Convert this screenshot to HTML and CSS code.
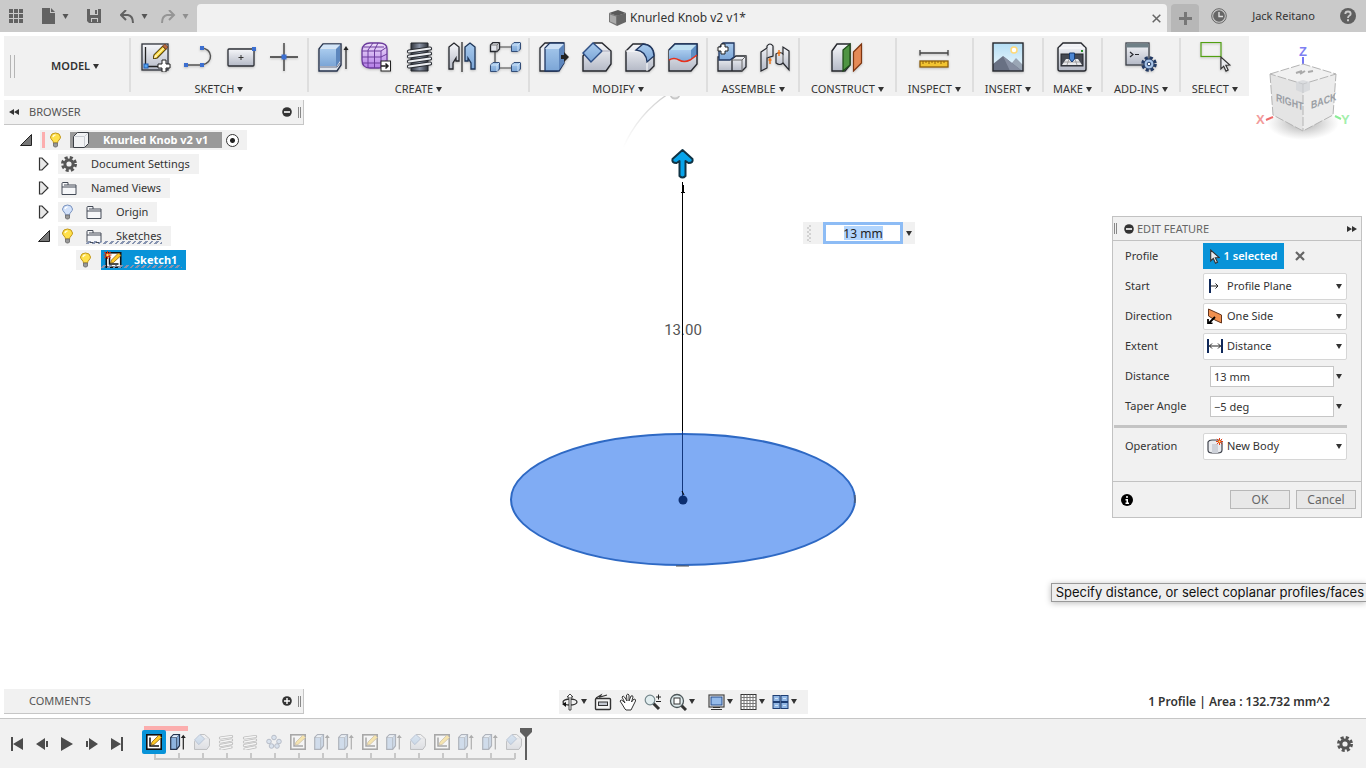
FILE: index.html
```html
<!DOCTYPE html>
<html lang="en">
<head>
<meta charset="utf-8">
<title>Knurled Knob v2 v1*</title>
<link rel="stylesheet" href="styles.css">
</head>
<body>
<svg class="sprite" aria-hidden="true">
  <defs>
    <linearGradient id="gBlue" x1="0" y1="0" x2="0" y2="1"><stop offset="0" stop-color="#a9cbee"/><stop offset="1" stop-color="#7ba5d6"/></linearGradient>
    <linearGradient id="gGray" x1="0" y1="0" x2="0" y2="1"><stop offset="0" stop-color="#f6f7fa"/><stop offset="1" stop-color="#b4b9c6"/></linearGradient>
    <linearGradient id="gPurple" x1="0" y1="0" x2="0" y2="1"><stop offset="0" stop-color="#efe2fb"/><stop offset="1" stop-color="#b27be6"/></linearGradient>
    <linearGradient id="gBar" x1="0" y1="0" x2="1" y2="0"><stop offset="0" stop-color="#30343c"/><stop offset=".5" stop-color="#8a93a5"/><stop offset="1" stop-color="#30343c"/></linearGradient>
    <linearGradient id="gSky" x1="0" y1="0" x2="0" y2="1"><stop offset="0" stop-color="#b4def5"/><stop offset="1" stop-color="#eef8fd"/></linearGradient>
    <linearGradient id="gFade" x1="0" y1="1" x2="0" y2="0"><stop offset="0" stop-color="#ddd" stop-opacity="0"/><stop offset="1" stop-color="#ccc"/></linearGradient>
    <radialGradient id="gShade"><stop offset="0" stop-color="#777" stop-opacity=".65"/><stop offset="1" stop-color="#999" stop-opacity="0"/></radialGradient>
  </defs>
  <symbol id="caret" viewBox="0 0 6 5"><path d="M0 0h6L3 5z" fill="currentColor"/></symbol>
  <symbol id="pencil" viewBox="0 0 14 14"><path d="M0 14l1-4 8-8 3 3-8 8z" fill="#f9cf2c" stroke="#54420a"/><path d="M1 13l1-3 2 2z" fill="#fff3cf"/><path d="M9 2l2-2 3 3-2 2z" fill="#b9683e" stroke="#6a3a1c" stroke-width=".8"/><path d="M3 11l7-7" stroke="#fff5a8" stroke-width="1.2"/></symbol>
  <symbol id="sketch-new" viewBox="0 0 30 30"><rect x="2" y="2" width="26" height="26" fill="url(#gGray)" stroke="#30343c" stroke-width="1.3"/><path d="M5.500 5v19.500H19" fill="none" stroke="#222" stroke-width="1.300"/><rect x="4" y="22" width="4" height="4" fill="#58a6ee" stroke="#1c5cb8"/><use href="#pencil" x="13" y="2" width="15" height="15"/><path d="M22 18h4v4h4v4h-4v4h-4v-4h-4v-4h4z" fill="#fff" stroke="#222"/></symbol>
  <symbol id="line" viewBox="0 0 30 30"><path d="M4 23h15c12-2 11-17-1-17" fill="none" stroke="#555" stroke-width="1.400"/><path d="M1 21h4v4H1zM17 21h4v4h-4zM17 4h4v4h-4z" fill="#3c6fd0"/></symbol>
  <symbol id="rect" viewBox="0 0 30 30"><rect x="2" y="7" width="26" height="17" rx="1" fill="url(#gGray)" stroke="#2c2f36" stroke-width="1.300"/><path d="M12.500 15.500h5M15 13v5" stroke="#333"/><rect x="26" y="5" width="4" height="4" fill="#3c6fd0"/></symbol>
  <symbol id="point" viewBox="0 0 30 30"><path d="M1 15h28M15 1v28" stroke="#333" stroke-width="1.300"/><rect x="12.500" y="12.500" width="5" height="5" fill="#3c6fd0"/></symbol>
  <symbol id="extrude" viewBox="0 0 30 30"><path d="M1 7l4-5h18v21l-4 6H1z" fill="#dfe4ec" stroke="#26334d" stroke-width="1.400"/><path d="M2 7h16v17H2z" fill="url(#gBlue)"/><path d="M2 6.500L5.500 2.500h17L18 6.500z" fill="#d2e5f8"/><path d="M18 7l4-4v16l-4 6z" fill="#5c86bd"/><path d="M1 25h18l4-5" fill="none" stroke="#66718a"/><path d="M28 27V6" stroke="#222" stroke-width="1.200"/><path d="M25.500 8L28 4l2.500 4z" fill="#222"/></symbol>
  <symbol id="form" viewBox="0 0 30 30"><path d="M1 8q1-7 8-7h9q8 0 8 6v12q-1 7-8 7H9q-8 0-8-8z" fill="url(#gPurple)" stroke="#6b3a9c" stroke-width="1.300"/><path d="M1 9h19l6-4M1 15h19l6-3M1 21h18l6-2M7 26V8l5-7M13.500 26V8L17 1M20 25V9M3 5h20" fill="none" stroke="#6b3a9c"/><rect x="20" y="19" width="9.500" height="10" fill="#fff" stroke="#222"/><path d="M20 24h7M24.500 21.500L27 24l-2.500 2.500" fill="none" stroke="#222" stroke-width="1.500"/></symbol>
  <symbol id="thread" viewBox="0 0 30 30"><path d="M7 1h17v28H7z" fill="url(#gBar)" stroke="#23262c"/><path d="M5 9.500l21-3M5 14.500l21-3M5 19.500l21-3M5 24.500l21-3" stroke="#2a2d33" stroke-width="4.200" stroke-linecap="round"/><path d="M5 9.500l21-3M5 14.500l21-3M5 19.500l21-3M5 24.500l21-3" stroke="#eceef2" stroke-width="2.200" stroke-linecap="round"/></symbol>
  <symbol id="mirror" viewBox="0 0 30 30"><path d="M2 5l5-4 5 4v14H9v-3l-3 5v6H2z" fill="url(#gGray)" stroke="#26282e" stroke-width="1.300"/><path d="M28 5l-5-4-5 4v14h3v-3l3 5v6h4z" fill="url(#gBlue)" stroke="#1d3558" stroke-width="1.300"/><path d="M15 0v30" stroke="#222" stroke-width="1.200"/></symbol>
  <symbol id="cubelet" viewBox="0 0 10 10"><path d="M.5 3L3 .5h6.500V7L7 9.500H.5z" fill="url(#gBlue)" stroke="#344e78"/><path d="M.5 3H7l2.500-2.500M7 3v6.500" fill="none" stroke="#dcecfb" stroke-width=".8"/></symbol>
  <symbol id="pattern" viewBox="0 0 32 30"><path d="M6 5h20M6 5v21h20" fill="none" stroke="#444" stroke-width="1.200"/><use href="#cubelet" x="22" y="0" width="10" height="10"/><use href="#cubelet" x="1" y="20" width="10" height="10"/><use href="#cubelet" x="22" y="20" width="10" height="10"/><path d="M1.500 3L4 .500h6.500V7L8 9.500H1.500z" fill="#e2e4ea" stroke="#26282e" stroke-width="1.300"/><path d="M1.500 3H8l2.500-2.500M8 3v6.500" fill="none" stroke="#777"/></symbol>
  <symbol id="presspull" viewBox="0 0 30 30"><path d="M1 6l5-5h18v21l-6 7H1z" fill="#eceef3" stroke="#26282e" stroke-width="1.300"/><path d="M6 6l5-5h14v20l-5 8H6z" fill="url(#gBlue)" stroke="#1f3660" stroke-width="1.300"/><path d="M6 7l5-5h14l-5 5z" fill="#cde0f5"/><path d="M20 7l5-5v19l-5 7z" fill="#5d86bd"/><path d="M22 13h3v-3l5 5-5 5v-3h-3z" fill="#222"/></symbol>
  <symbol id="chamfer" viewBox="0 0 30 30"><path d="M1 14L12 1h8l9 8v13l-5 7H1z" fill="url(#gGray)" stroke="#26282e" stroke-width="1.400"/><path d="M1 11L11 1l9 8-11 11z" fill="url(#gBlue)" stroke="#2d4e85" stroke-width="1.400"/><path d="M20 9h8" stroke="#aab"/></symbol>
  <symbol id="fillet" viewBox="0 0 30 30"><path d="M1 9l7-7h10q11 1 11 14v8l-5 5H1z" fill="url(#gGray)" stroke="#26282e" stroke-width="1.400"/><path d="M1 9h10q10 1 11 11v9" fill="none" stroke="#fff"/><path d="M11 8l7-6q11 1 11 12l-7 6Q21 9 11 8z" fill="url(#gBlue)" stroke="#1f3660" stroke-width="1.300"/></symbol>
  <symbol id="body-split" viewBox="0 0 30 30"><path d="M1 8l6-6h22v20l-6 7H1z" fill="url(#gGray)" stroke="#26282e" stroke-width="1.400"/><path d="M1 8h22v10q-6 4-12 0-5-2-10 0z" fill="url(#gBlue)"/><path d="M1 8l6-6h22l-6 6z" fill="#bfe0f2"/><path d="M23 8l6-6v11l-6 5z" fill="#5d8ec4"/><path d="M1 8l6-6h22v12" fill="none" stroke="#1f3660" stroke-width="1.300"/><path d="M1 18q5-3 10 0t11 0l7-5" fill="none" stroke="#e8311c" stroke-width="1.500"/></symbol>
  <symbol id="component" viewBox="0 0 30 30"><path d="M1 15h14v14H1zM15 17l4-3h10v11l-4 4H15z" fill="url(#gGray)" stroke="#26282e" stroke-width="1.300"/><path d="M2 6l4-5h11v14l-4 3H2z" fill="url(#gBlue)" stroke="#1f3660" stroke-width="1.300"/><path d="M15 18h10l4-4M25 18v11" fill="none" stroke="#666"/><path d="M4 2h4v3h3v4H8v3H4V9H1V5h3z" fill="#fff" stroke="#222"/></symbol>
  <symbol id="joint" viewBox="0 0 30 30"><path d="M1 10l6-4V4q3-4 6 0v10l-6 2v10l-6 3z" fill="url(#gGray)" stroke="#26282e" stroke-width="1.200"/><path d="M7 7v9" stroke="#777"/><path d="M29 9l-6-4v7q-3-3-7 0v9q4 3 7 0l6 7z" fill="url(#gGray)" stroke="#26282e" stroke-width="1.200"/><path d="M23 12v9" stroke="#555"/><path d="M10 16v6M19 8v6M8.500 18h3M17.500 11h3" stroke="#ef7313" stroke-width="1.400"/></symbol>
  <symbol id="construct" viewBox="0 0 30 30"><path d="M0 9l5-7h13v21l-5 6H0z" fill="url(#gGray)" stroke="#26282e" stroke-width="1.400"/><path d="M11 8l7-6v21l-7 6z" fill="#4f9443" stroke="#1d4a17" stroke-width="1.200"/><path d="M21.500 10l8-8v19l-8 8z" fill="#e58a57" stroke="#7e3510" stroke-width="1.200"/></symbol>
  <symbol id="measure" viewBox="0 0 30 30"><path d="M1 11h28M1 8v5.500M29 8v5.500" stroke="#444" stroke-width="1.300"/><rect x="1" y="19" width="28" height="6" fill="#f2c431" stroke="#8c5e0b" stroke-width="1.300"/><path d="M4 19v3M7 19v2M10 19v3M13 19v2M16 19v3M19 19v2M22 19v3M25 19v2" stroke="#8c5e0b"/></symbol>
  <symbol id="picture" viewBox="0 0 32 30"><rect x="1" y="1" width="30" height="28" fill="url(#gSky)"/><circle cx="22" cy="8" r="3" fill="#fff" stroke="#ffd978" stroke-width="1.500"/><path d="M14 28l10-12 7 7v6z" fill="#9aa6b5"/><path d="M1 22l10-8 19 15H1z" fill="#687083"/><path d="M11 14l19 15H18z" fill="#858da0"/><rect x="1" y="1" width="30" height="28" fill="none" stroke="#26282e" stroke-width="1.400"/></symbol>
  <symbol id="make" viewBox="0 0 30 30"><path d="M1 6l5-5h18l5 5v21q0 2-2 2H3q-2 0-2-2z" fill="url(#gGray)" stroke="#26282e" stroke-width="1.400"/><path d="M2 6h26" stroke="#fff"/><rect x="4" y="12" width="22" height="12" fill="#454952" stroke="#26282e"/><path d="M9 17h12l4 6H5z" fill="#e8e9ec"/><path d="M7 20h16M12 17l-2 6M18 17l2 6" stroke="#888" stroke-width=".7"/><path d="M12.500 11h5v6l-2.500 3-2.500-3z" fill="#4c86d3" stroke="#153b73"/><rect x="24" y="8" width="2" height="2" fill="#258d25"/></symbol>
  <symbol id="gear-blue" viewBox="0 0 16 16"><circle cx="8" cy="8" r="6.200" fill="none" stroke="#233a63" stroke-width="3.200" stroke-dasharray="3 1.860"/><circle cx="8" cy="8" r="5" fill="#a7c4e8" stroke="#233a63"/><circle cx="8" cy="8" r="1.800" fill="#fff" stroke="#233a63"/></symbol>
  <symbol id="addins" viewBox="0 0 32 30"><rect x="1" y="1" width="23" height="22" fill="url(#gGray)" stroke="#3b3f48" stroke-width="1.300"/><rect x="1.500" y="1.500" width="22" height="4" fill="#6f8087"/><path d="M5 10l3 2.500L5 15M10 12.500h4" fill="none" stroke="#26282e" stroke-width="1.200"/><use href="#gear-blue" x="16" y="14" width="16" height="16"/></symbol>
  <symbol id="cursor" viewBox="0 0 10 15"><path d="M.7 1v11l2.600-2.500 2.200 4.700 2-1-2.200-4.500 3.800-.2z" fill="#e9ebee" stroke="#333" stroke-width="1.100"/></symbol>
  <symbol id="select" viewBox="0 0 32 30"><rect x="2" y="0.500" width="20" height="14" fill="none" stroke="#51a011" stroke-width="1.200"/><use href="#cursor" x="21" y="14" width="11" height="16"/></symbol>
  <symbol id="bulb" viewBox="0 0 12 16"><path d="M4 11Q4 9.500 2.500 8 1 6.500 1 5q.5-4 5-4t5 4q0 1.500-1.500 3Q8 9.500 8 11z" fill="#ffe04a" stroke="#c29718"/><path d="M3.500 5Q4 3 6 3" stroke="#fffbd6" stroke-width="1.500" fill="none"/><path d="M4 11h4v3l-1 1H5l-1-1z" fill="#999" stroke="#666" stroke-width=".8"/></symbol>
  <symbol id="bulb-off" viewBox="0 0 12 16"><path d="M4 11Q4 9.500 2.500 8 1 6.500 1 5q.5-4 5-4t5 4q0 1.500-1.500 3Q8 9.500 8 11z" fill="#d3e2fa" stroke="#7a93bf"/><path d="M3.500 5Q4 3 6 3" stroke="#fff" stroke-width="1.500" fill="none"/><path d="M4 11h4v3l-1 1H5l-1-1z" fill="#999" stroke="#666" stroke-width=".8"/></symbol>
  <symbol id="folder" viewBox="0 0 16 14"><path d="M1 13V2q0-1 1-1h5v2.500h8V13z" fill="#f6f7f9" stroke="#444b57"/><path d="M1 5.500h14M3 3.500h4" stroke="#444b57"/></symbol>
  <symbol id="cube" viewBox="0 0 16 16"><path d="M.5 4.500l4-4h11v11l-4 4H.5z" fill="#f1f2f4" stroke="#3c3f45"/><path d="M1.500 4.500h10l3.500-3.500M11.500 5v10" fill="none" stroke="#c9ccd2"/></symbol>
  <symbol id="gear" viewBox="0 0 16 16"><circle cx="8" cy="8" r="6.500" fill="none" stroke="currentColor" stroke-width="3" stroke-dasharray="3 2.105"/><circle cx="8" cy="8" r="4.100" fill="none" stroke="currentColor" stroke-width="3"/></symbol>
  <symbol id="closed" viewBox="0 0 12 14"><path d="M1.500 1v12H4l6-6-6-6z" fill="#e8e8e8" stroke="#333" stroke-width="1.200"/></symbol>
  <symbol id="open" viewBox="0 0 12 12"><path d="M.5 11.500h11V.5z" fill="#777" stroke="#222"/></symbol>
  <symbol id="sketch" viewBox="0 0 16 16"><rect x=".8" y=".8" width="14.400" height="14.400" fill="#fff" stroke="#111" stroke-width="1.600"/><path d="M4 3.500V12h9" fill="none" stroke="#111" stroke-width="1.500"/><path d="M5 11l1-3 7-7 2.500 2.500-7.500 7z" fill="#ffc928" stroke="#8a6514" stroke-width=".8"/></symbol>
  <symbol id="spark" viewBox="0 0 8 8"><path d="M4 0v8M0 4h8M1 1l6 6M7 1L1 7" stroke="#e2360e" stroke-width="1.100"/><circle cx="4" cy="4" r="1.200" fill="#ffe55a"/></symbol>
  <symbol id="extrude-s" viewBox="0 0 16 16"><path d="M.7 3.500L3.500.7h6v11l-2.800 3.600h-6z" fill="#8db3df" stroke="#26334d" stroke-width="1.200"/><path d="M.7 3.500h6L9.500.7M6.700 4v11" fill="none" stroke="#26334d" stroke-width=".8"/><path d="M1.500 3.200L3.700 1.200h5L6.500 3.200z" fill="#e4effb"/><path d="M13.300 15.500V2" stroke="#222" stroke-width="1.200"/><path d="M10.800 4L13.300.8 15.800 4z" fill="#222"/></symbol>
  <symbol id="coil-s" viewBox="0 0 16 16"><path d="M2.500 4l11-1.500M2.500 8l11-2M2.500 11.500l11-2M3 15l10-2" stroke="#555" stroke-width="3.200" stroke-linecap="round"/><path d="M2.500 4l11-1.500M2.500 8l11-2M2.500 11.500l11-2M3 15l10-2" stroke="#fff" stroke-width="1.400" stroke-linecap="round"/></symbol>
  <symbol id="circ-s" viewBox="0 0 16 16"><g fill="#aac4e6" stroke="#3d4f70"><circle cx="8" cy="3.500" r="2.300"/><circle cx="3" cy="7.500" r="2.300"/><circle cx="13" cy="7.500" r="2.300"/><circle cx="5.500" cy="12" r="2.300"/><circle cx="11" cy="12" r="2.300"/></g></symbol>
  <symbol id="minus" viewBox="0 0 10 10"><circle cx="5" cy="5" r="4.800" fill="#333"/><path d="M2 5h6" stroke="#fff" stroke-width="1.600"/></symbol>
  <symbol id="plus" viewBox="0 0 10 10"><circle cx="5" cy="5" r="4.800" fill="#333"/><path d="M2 5h6M5 2v6" stroke="#fff" stroke-width="1.400"/></symbol>
  <symbol id="collapse" viewBox="0 0 10 6"><path d="M5 0v6L0 3zM10 0v6L5 3z" fill="#333"/></symbol>
</svg>

<header class="titlebar">
  <div class="quick">
    <button aria-label="Data panel"><svg width="15" height="15" viewBox="0 0 15 15"><path d="M0 0h4v4H0zM5 0h4v4H5zM10 0h4v4h-4zM0 5h4v4H0zM5 5h4v4H5zM10 5h4v4h-4zM0 10h4v4H0zM5 10h4v4H5zM10 10h4v4h-4z" fill="#626262"/></svg></button>
    <button class="with-caret" aria-label="File"><svg width="14" height="16" viewBox="0 0 14 16"><path d="M0 0h8v5h5v11H0z" fill="#626262"/><path d="M9 0l4 4H9z" fill="#626262"/></svg><svg class="caret"><use href="#caret"/></svg></button>
    <button aria-label="Save"><svg width="15" height="14" viewBox="0 0 15 14"><path d="M0 0h14v14H2l-2-2z" fill="#626262"/><path d="M3 0h8v6H3zM4 9h7v4H4z" fill="#cacaca"/><path d="M8 1h2v4H8zM5 10h5v3H5z" fill="#626262"/></svg></button>
    <button class="with-caret" aria-label="Undo"><svg width="15" height="13" viewBox="0 0 15 13"><path d="M2 5h6q5 1 5 8" fill="none" stroke="#626262" stroke-width="2"/><path d="M6 0L1 5l5 5" fill="none" stroke="#626262" stroke-width="2"/></svg><svg class="caret"><use href="#caret"/></svg></button>
    <button class="with-caret faded" aria-label="Redo"><svg width="15" height="13" viewBox="0 0 15 13"><path d="M12 5H6q-5 1-5 8" fill="none" stroke="#626262" stroke-width="2"/><path d="M8 0l5 5-5 5" fill="none" stroke="#626262" stroke-width="2"/></svg><svg class="caret"><use href="#caret"/></svg></button>
  </div>
  <div class="tab">
    <h1 class="tab-title"><svg width="17" height="16" viewBox="0 0 17 16"><path d="M0 3l9-3 8 3-9 3z" fill="#5a5a5a"/><path d="M0 3l8 2.500V16l-8-4z" fill="#777"/><path d="M8 5.500L17 3v9l-9 4z" fill="#666"/><path d="M1 4.500L7 6.500v7.500L1 11.500z" fill="#aaa"/></svg>Knurled Knob v2 v1*</h1>
    <button class="tab-close" aria-label="Close tab"><svg width="9" height="9" viewBox="0 0 9 9"><path d="M.7.7l7.600 7.600M8.300.7L.7 8.300" stroke="#666" stroke-width="1.500"/></svg></button>
  </div>
  <button class="new-tab" aria-label="New tab"><svg width="13" height="13" viewBox="0 0 13 13"><path d="M0 6.500h13M6.500 0v13" stroke="#777" stroke-width="3"/></svg></button>
  <div class="account">
    <button aria-label="Job status"><svg width="16" height="16" viewBox="0 0 16 16"><circle cx="8" cy="8" r="7.300" fill="none" stroke="#666"/><circle cx="8" cy="8" r="5.800" fill="#666"/><path d="M8 4v4.500h4" fill="none" stroke="#ddd" stroke-width="1.400"/></svg></button>
    <button class="user">Jack Reitano</button>
    <button aria-label="Help"><svg width="16" height="16" viewBox="0 0 16 16"><circle cx="8" cy="8" r="8" fill="#5f5f5f"/><path d="M5.300 6q0-2.500 2.700-2.500T10.700 6Q10.700 7.200 9 8q-1 .6-1 2" fill="none" stroke="#ccc" stroke-width="1.800"/><path d="M7 11.200h2v2H7z" fill="#ccc"/></svg></button>
  </div>
</header>

<main class="workspace">
  <svg class="scene" viewBox="0 0 1366 686" role="img" aria-label="Extrude preview">
    <path d="M623 116q15-34 45-54" fill="none" stroke="url(#gFade)" stroke-width="1.500"/>
    <circle cx="675" cy="62" r="4.500" fill="#eee" stroke="#c8c8c8" stroke-width="2"/>
    <ellipse cx="683" cy="467.500" rx="172" ry="65.500" fill="#80acf4" stroke="#2e69c4" stroke-width="2"/>
    <path d="M676 534h13M855 463v8" stroke="#555"/>
    <path d="M682.500 399v67" stroke="#12377d"/>
    <path d="M683.500 153v8M681 160.500h4M682 459l2 4" stroke="#000" fill="none"/>
    <circle cx="683" cy="468" r="4.500" fill="#0b2e70"/>
    <text class="dimension" x="683" y="303" text-anchor="middle">13.00</text>
    <path d="M682.500 150v249" stroke="#000"/>
    <path d="M682.500 118l-10 9q-1 4 4 4l3-2v15q3 3 6 0v-15l3 2q5 0 4-4z" fill="#07a4ea" stroke="#103344" stroke-width="2" stroke-linejoin="round"/>
  </svg>

  <svg class="viewcube" viewBox="0 0 98 96" role="img" aria-label="View cube">
    <ellipse cx="46" cy="79" rx="36" ry="17" fill="url(#gShade)"/>
    <path d="M46 13v9" stroke="#7477f4" stroke-width="2"/><path d="M9 76l7-3" stroke="#ef6a6a" stroke-width="2"/><path d="M78 72l6 3" stroke="#8aed97" stroke-width="2"/>
    <path d="M13 30l33-10 33 10-33 10z" fill="#f1f1f1"/><path d="M13 30l33 10v47L16 71z" fill="#e4e4e4"/><path d="M79 30L46 40v47l30-16z" fill="#ececec"/>
    <path d="M13 30l33-10 33 10-33 10zL16 71l30 16 30-16 3-41M46 40v47" fill="none" stroke="#b4b4b4" stroke-dasharray="9 2"/>
    <path d="M39 38l7-2 7 2v8l-7 3-7-3z" fill="#cfd2d7" opacity=".65"/><path d="M39 29l6-2M43 30l5-3M51 28l5-1" stroke="#aaa" stroke-width="2"/>
    <text class="axis" x="42" y="12" fill="#7e80f2">Z</text><text class="axis" x="-1" y="80" fill="#f29b9b">X</text><text class="axis" x="84" y="80" fill="#a2efac">Y</text>
    <text class="face" transform="matrix(.8 .28 0 1 19 57)">RIGHT</text><text class="face" transform="matrix(.8 -.28 0 1 54 65)">BACK</text>
  </svg>

  <nav class="toolbar" aria-label="Tools">
    <div class="tool-mode"><span class="grip"></span><button class="tool-menu strong">MODEL<svg class="caret"><use href="#caret"/></svg></button></div>
    <section class="tool-group">
      <div class="tools"><button aria-label="Create sketch"><svg><use href="#sketch-new"/></svg></button><button aria-label="Line"><svg><use href="#line"/></svg></button><button aria-label="Rectangle"><svg><use href="#rect"/></svg></button><button aria-label="Point"><svg><use href="#point"/></svg></button></div>
      <button class="tool-menu">SKETCH<svg class="caret"><use href="#caret"/></svg></button>
    </section>
    <section class="tool-group">
      <div class="tools"><button aria-label="Extrude"><svg><use href="#extrude"/></svg></button><button aria-label="Create form"><svg><use href="#form"/></svg></button><button aria-label="Thread"><svg><use href="#thread"/></svg></button><button aria-label="Mirror"><svg><use href="#mirror"/></svg></button><button aria-label="Pattern"><svg><use href="#pattern"/></svg></button></div>
      <button class="tool-menu">CREATE<svg class="caret"><use href="#caret"/></svg></button>
    </section>
    <section class="tool-group">
      <div class="tools"><button aria-label="Press pull"><svg><use href="#presspull"/></svg></button><button aria-label="Chamfer"><svg><use href="#chamfer"/></svg></button><button aria-label="Fillet"><svg><use href="#fillet"/></svg></button><button aria-label="Split body"><svg><use href="#body-split"/></svg></button></div>
      <button class="tool-menu">MODIFY<svg class="caret"><use href="#caret"/></svg></button>
    </section>
    <section class="tool-group">
      <div class="tools"><button aria-label="New component"><svg><use href="#component"/></svg></button><button aria-label="Joint"><svg><use href="#joint"/></svg></button></div>
      <button class="tool-menu">ASSEMBLE<svg class="caret"><use href="#caret"/></svg></button>
    </section>
    <section class="tool-group">
      <div class="tools"><button aria-label="Offset plane"><svg><use href="#construct"/></svg></button></div>
      <button class="tool-menu">CONSTRUCT<svg class="caret"><use href="#caret"/></svg></button>
    </section>
    <section class="tool-group">
      <div class="tools"><button aria-label="Measure"><svg><use href="#measure"/></svg></button></div>
      <button class="tool-menu">INSPECT<svg class="caret"><use href="#caret"/></svg></button>
    </section>
    <section class="tool-group">
      <div class="tools"><button aria-label="Insert image"><svg><use href="#picture"/></svg></button></div>
      <button class="tool-menu">INSERT<svg class="caret"><use href="#caret"/></svg></button>
    </section>
    <section class="tool-group snug">
      <div class="tools"><button aria-label="3D print"><svg><use href="#make"/></svg></button></div>
      <button class="tool-menu">MAKE<svg class="caret"><use href="#caret"/></svg></button>
    </section>
    <section class="tool-group">
      <div class="tools"><button aria-label="Scripts and add-ins"><svg><use href="#addins"/></svg></button></div>
      <button class="tool-menu">ADD-INS<svg class="caret"><use href="#caret"/></svg></button>
    </section>
    <section class="tool-group">
      <div class="tools"><button aria-label="Select"><svg><use href="#select"/></svg></button></div>
      <button class="tool-menu">SELECT<svg class="caret"><use href="#caret"/></svg></button>
    </section>
  </nav>

  <div class="middle">
    <aside class="browser">
      <header class="bar"><button aria-label="Collapse browser"><svg width="10" height="6"><use href="#collapse"/></svg></button><h2>BROWSER</h2><button aria-label="Minimise"><svg width="10" height="10"><use href="#minus"/></svg></button><span class="edge"></span></header>
      <ul class="tree">
        <li class="row level-0"><svg class="twist"><use href="#open"/></svg><div class="node root"><span class="mark"></span><svg class="i-bulb"><use href="#bulb"/></svg><div class="root-name"><svg class="i-cube"><use href="#cube"/></svg><b>Knurled Knob v2 v1</b></div><input type="radio" name="active" checked aria-label="Activate component"></div></li>
        <li class="row level-1"><svg class="twist"><use href="#closed"/></svg><div class="node"><svg class="i-folder gear"><use href="#gear"/></svg><span>Document Settings</span></div></li>
        <li class="row level-1"><svg class="twist"><use href="#closed"/></svg><div class="node"><svg class="i-folder"><use href="#folder"/></svg><span>Named Views</span></div></li>
        <li class="row level-1"><svg class="twist"><use href="#closed"/></svg><div class="node"><svg class="i-bulb"><use href="#bulb-off"/></svg><svg class="i-folder"><use href="#folder"/></svg><span>Origin</span></div></li>
        <li class="row level-1"><svg class="twist"><use href="#open"/></svg><div class="node"><svg class="i-bulb"><use href="#bulb"/></svg><div class="hatched"><svg class="i-folder"><use href="#folder"/></svg><span>Sketches</span></div></div></li>
        <li class="row level-2"><div class="node leaf"><svg class="i-bulb"><use href="#bulb"/></svg><div class="picked"><svg class="i-sketch" viewBox="0 0 20 18"><use href="#sketch" x="2" y="1" width="17" height="16"/><use href="#spark" x="0" y="0" width="9" height="8"/></svg><b>Sketch1</b></div></div></li>
      </ul>
    </aside>

    <form class="dialog">
      <header class="dialog-head"><span class="edge"></span><button type="button" aria-label="Minimise"><svg width="10" height="10"><use href="#minus"/></svg></button><h2>EDIT FEATURE</h2><button type="button" aria-label="Expand"><svg class="flip" width="10" height="6"><use href="#collapse"/></svg></button></header>
      <div class="fields">
        <div class="field"><label for="profile">Profile</label><div class="control"><button type="button" id="profile" class="selected"><svg width="10" height="15"><use href="#cursor"/></svg>1 selected</button><button type="button" class="clear" aria-label="Clear selection"><svg width="10" height="10" viewBox="0 0 10 10"><path d="M1 1l8 8M9 1L1 9" stroke="#666" stroke-width="2.200"/></svg></button></div></div>
        <div class="field"><label for="start">Start</label><div class="control pick"><select id="start"><option>Profile Plane</option></select><svg class="pick-icon" viewBox="0 0 16 16"><path d="M3 1v14" stroke="#10295a" stroke-width="2"/><path d="M4 8h7M8.500 5.500L11 8l-2.500 2.500" fill="none" stroke="#222"/></svg><svg class="caret"><use href="#caret"/></svg></div></div>
        <div class="field"><label for="direction">Direction</label><div class="control pick"><select id="direction"><option>One Side</option></select><svg class="pick-icon" viewBox="0 0 16 16"><path d="M1.500 1l13 6v8L8 12 1.500 8z" fill="#f0904f" stroke="#64351c"/><path d="M2 15l6-6M1 11v4.500h4.500" fill="none" stroke="#000" stroke-width="1.800"/></svg><svg class="caret"><use href="#caret"/></svg></div></div>
        <div class="field"><label for="extent">Extent</label><div class="control pick"><select id="extent"><option>Distance</option></select><svg class="pick-icon" viewBox="0 0 16 16"><path d="M1 1v14M15 1v14" stroke="#10295a" stroke-width="2"/><path d="M2 8h12M5 5.500L2.500 8 5 10.500M11 5.500L13.500 8 11 10.500" fill="none" stroke="#222"/></svg><svg class="caret"><use href="#caret"/></svg></div></div>
        <div class="field"><label for="distance">Distance</label><div class="control value"><input id="distance" type="text" value="13 mm"><svg class="caret"><use href="#caret"/></svg></div></div>
        <div class="field"><label for="taper">Taper Angle</label><div class="control value"><input id="taper" type="text" value="−5 deg"><svg class="caret"><use href="#caret"/></svg></div></div>
        <hr>
        <div class="field"><label for="operation">Operation</label><div class="control pick"><select id="operation"><option>New Body</option></select><svg class="pick-icon" viewBox="0 0 16 16"><path d="M1 4q1-2 4-2h6q4 0 4 3v7q0 3-4 3H5q-4 0-4-3z" fill="#e9ebef" stroke="#3f434c" stroke-width="1.200"/><path d="M5 6h6v9H5z" fill="#cdd1d9"/><use href="#spark" x="9" y="0" width="7" height="7"/></svg><svg class="caret"><use href="#caret"/></svg></div></div>
      </div>
      <footer class="dialog-foot"><button type="button" class="info" aria-label="Information"><svg width="12" height="12" viewBox="0 0 12 12"><circle cx="6" cy="6" r="6" fill="#000"/><path d="M5 2.200h2v1.600H5zM4.500 5H7v3.500h1V10H4.500V8.500h1v-2h-1z" fill="#fff"/></svg></button><button type="button" class="action">OK</button><button type="button" class="action">Cancel</button></footer>
    </form>
  </div>

  <div class="heads-up"><span class="dots"></span><input type="text" value="13 mm" aria-label="Distance"><svg class="caret"><use href="#caret"/></svg></div>
  <div class="tooltip" role="tooltip">Specify distance, or select coplanar profiles/faces</div>

  <div class="bottom">
    <section class="bar comments"><h2>COMMENTS</h2><button aria-label="Add comment"><svg width="10" height="10"><use href="#plus"/></svg></button><span class="edge"></span></section>
    <nav class="view-tools" aria-label="View">
      <button aria-label="Orbit"><svg width="18" height="18" viewBox="0 0 18 18"><ellipse cx="9" cy="9" rx="7" ry="3" fill="none" stroke="#333" stroke-width="1.300"/><path d="M8 17V4H6l3-3 3 3h-2v13z" fill="#fff" stroke="#333" stroke-width=".9"/><path d="M1 11l4-2v5z" fill="#111"/></svg><svg class="caret"><use href="#caret"/></svg></button>
      <button aria-label="Look at"><svg width="18" height="18" viewBox="0 0 18 18"><path d="M2 5l5-3-1 2 7-2" fill="none" stroke="#333" stroke-width="1.200"/><rect x="1.500" y="5.500" width="15" height="11" rx="1" fill="#f5f5f5" stroke="#333" stroke-width="1.400"/><rect x="4.500" y="9" width="9" height="3.500" fill="#c4c8d0" stroke="#333"/></svg></button>
      <button aria-label="Pan"><svg width="18" height="18" viewBox="0 0 18 18"><path d="M6 16L3 11 1 8q1-2 3 0l2 2-3-6q1-2 2.500 0L8 8 7.500 2q1.500-2 2.500 0v6l2-5q2-1 2 1l-1.500 5L15 6q2 0 1.500 2L13 15l-1 2H7z" fill="#fff" stroke="#333"/></svg></button>
      <button aria-label="Zoom"><svg width="18" height="18" viewBox="0 0 18 18"><path d="M9 10l6 6" stroke="#333" stroke-width="3"/><circle cx="6" cy="7" r="4.800" fill="#e1edef" stroke="#75878c" stroke-width="1.200"/><path d="M12 4h5M14.500 1.500v5M12 8.500h5" stroke="#222"/></svg></button>
      <button aria-label="Fit"><svg width="18" height="18" viewBox="0 0 18 18"><path d="M11 11l6 6" stroke="#333" stroke-width="3"/><circle cx="8" cy="8" r="6.500" fill="#e1edef" stroke="#4c5659" stroke-width="1.300"/><rect x="5" y="5" width="6" height="6" fill="#fff" stroke="#333"/></svg><svg class="caret"><use href="#caret"/></svg></button>
      <button class="spaced" aria-label="Display settings"><svg width="17" height="18" viewBox="0 0 17 18"><rect x="1" y="2" width="15" height="12" fill="#eee" stroke="#444" stroke-width="1.200"/><rect x="3" y="4" width="11" height="8" fill="#95bbea" stroke="#244d8d"/><path d="M5 14.500h7M3 16.500h11" stroke="#333" stroke-width="1.200"/></svg><svg class="caret"><use href="#caret"/></svg></button>
      <button aria-label="Grid and snaps"><svg width="17" height="18" viewBox="0 0 17 18"><rect x="1" y="1.500" width="15" height="15" fill="#fff" stroke="#333"/><path d="M4 1.500v15M7 1.500v15M10 1.500v15M13 1.500v15M1 4.500h15M1 7.500h15M1 10.500h15M1 13.500h15" stroke="#777"/></svg><svg class="caret"><use href="#caret"/></svg></button>
      <button aria-label="Viewports"><svg width="17" height="18" viewBox="0 0 17 18"><g fill="#91b7e5" stroke="#1e3e73"><rect x="1" y="2.500" width="7" height="6"/><rect x="9" y="2.500" width="7" height="6"/><rect x="1" y="9.500" width="7" height="6"/><rect x="9" y="9.500" width="7" height="6"/></g><path d="M3 5.500h3M11 5.500h3M3 12.500h3M11 12.500h3" stroke="#cfe2f6"/></svg><svg class="caret"><use href="#caret"/></svg></button>
    </nav>
    <output class="status">1 Profile | Area : 132.732 mm^2</output>
  </div>
</main>

<footer class="timeline">
  <div class="playback">
    <button aria-label="Go to start"><svg viewBox="0 0 14 14"><path d="M1 0h2v14H1zM13 1v12L3 7z"/></svg></button>
    <button aria-label="Step back"><svg viewBox="0 0 14 14"><path d="M10 1v12L1 7zM11 4h2v6h-2z"/></svg></button>
    <button aria-label="Play"><svg viewBox="0 0 14 14"><path d="M1 0v14l12-7z"/></svg></button>
    <button aria-label="Step forward"><svg viewBox="0 0 14 14"><path d="M4 1v12l9-6zM1 4h2v6H1z"/></svg></button>
    <button aria-label="Go to end"><svg viewBox="0 0 14 14"><path d="M11 0h2v14h-2zM1 1v12l10-6z"/></svg></button>
  </div>
  <ol class="history">
    <li class="current"><svg><use href="#sketch"/></svg></li>
    <li class="live"><svg><use href="#extrude-s"/></svg></li>
    <li><svg><use href="#chamfer"/></svg></li>
    <li><svg><use href="#coil-s"/></svg></li>
    <li><svg><use href="#coil-s"/></svg></li>
    <li><svg><use href="#circ-s"/></svg></li>
    <li><svg><use href="#sketch"/></svg></li>
    <li><svg><use href="#extrude-s"/></svg></li>
    <li><svg><use href="#extrude-s"/></svg></li>
    <li><svg><use href="#sketch"/></svg></li>
    <li><svg><use href="#extrude-s"/></svg></li>
    <li><svg><use href="#chamfer"/></svg></li>
    <li><svg><use href="#sketch"/></svg></li>
    <li><svg><use href="#extrude-s"/></svg></li>
    <li><svg><use href="#extrude-s"/></svg></li>
    <li><svg><use href="#chamfer"/></svg></li>
  </ol>
  <svg class="playhead" viewBox="0 0 12 32"><path d="M0 0h12v4L7 9v23H5V9L0 4z" fill="#5f5f5f"/></svg>
  <button class="settings" aria-label="Timeline settings"><svg width="16" height="16"><use href="#gear"/></svg></button>
</footer>
</body>
</html>
```

FILE: styles.css
```css
* { box-sizing: border-box; }

body {
  margin: 0;
  height: 100vh;
  display: flex;
  flex-direction: column;
  overflow: hidden;
  background: #fff;
  color: #333;
  font: 11px/16px "Noto Sans", "Open Sans", sans-serif;
}

button {
  display: flex;
  align-items: center;
  justify-content: center;
  margin: 0;
  padding: 0;
  border: 0;
  background: none;
  color: inherit;
  font: inherit;
}

svg { display: block; flex: none; }
h1, h2 { margin: 0; font: inherit; }
ul, ol { margin: 0; padding: 0; list-style: none; }
.sprite { position: absolute; width: 0; height: 0; }
.caret { width: 6px; height: 5px; color: #333; }

/* Title bar */
.titlebar { display: flex; height: 32px; background: #cacaca; }
.quick { display: flex; align-items: center; width: 197px; padding-left: 9px; gap: 18px; }
.with-caret { gap: 6px; }
.with-caret + .with-caret { margin-left: -5px; }
.quick .caret { color: #555; width: 7px; }
.faded { opacity: .5; }
.tab {
  flex: 1;
  display: flex;
  align-items: center;
  margin-top: 4px;
  padding: 0 6px;
  border-radius: 4px 4px 0 0;
  background: #f1f1f1;
}
.tab-title { flex: 1; display: flex; align-items: center; justify-content: center; gap: 4px; font-size: 12px; }
.new-tab { width: 28px; margin: 4px 0 0 4px; border-radius: 4px 4px 0 0; background: #b7b7b7; }
.account { display: flex; align-items: center; justify-content: space-between; width: 167px; padding: 0 10px 0 12px; }

/* Workspace */
.workspace { position: relative; flex: 1; display: flex; flex-direction: column; padding: 4px; }
.scene { position: absolute; top: 0; left: 0; width: 100%; height: 100%; }
.dimension { fill: #555; font: 15px Roboto, sans-serif; }
.viewcube { position: absolute; top: 12px; right: 11px; width: 98px; height: 96px; overflow: visible; }
.axis { font: bold 13px "Liberation Sans", sans-serif; }
.face { font: bold 11px "Liberation Sans", sans-serif; fill: #9a9ea4; }

.toolbar { position: relative; align-self: flex-start; display: flex; height: 60px; background: #f1f1f1; }
.tool-mode { display: flex; align-items: center; width: 125px; padding-left: 6px; gap: 36px; }
.grip { width: 5px; height: 23px; border: solid #b5b5b5; border-width: 0 1px; }
.tool-menu { gap: 3px; width: 100%; padding: 0 9px; line-height: 14px; }
.strong { width: auto; padding: 0; font-weight: 600; }
.tool-group { position: relative; display: flex; flex-direction: column; justify-content: space-between; padding: 5px 2px 0 4px; }
.tool-group::before { content: ""; position: absolute; left: 0; top: 2px; bottom: 4px; width: 2px; background: #dedede; }
.snug .tool-menu { padding: 0 7px; }
.tools { display: flex; justify-content: center; }
.tools button { width: 43px; height: 32px; }
.tools svg { width: 32px; height: 30px; filter: drop-shadow(0 1px 1px #bbb); }

.middle { flex: 1; display: flex; align-items: flex-start; justify-content: space-between; padding-top: 4px; }
.browser { position: relative; width: 300px; }
.bar {
  display: flex;
  align-items: center;
  height: 25px;
  padding: 0 2px 0 5px;
  border: solid #c6c6c6;
  border-width: 0 1px 1px 0;
  background: #f1f1f1;
  color: #555;
}
.bar h2 { flex: 1; margin-left: 10px; }
.edge { width: 3px; height: 11px; margin-left: 6px; border: solid #888; border-width: 0 1px; }

.tree { display: grid; gap: 4px; padding-top: 5px; }
.row { display: flex; align-items: center; gap: 8px; height: 20px; }
.level-0 { padding-left: 16px; }
.level-1 { padding-left: 34px; }
.level-2 { padding-left: 72px; }
.twist { width: 12px; height: 14px; }
.node { display: flex; align-items: center; height: 20px; padding: 0 9px 0 3px; background: #f1f1f1; }
.node span, .node b { margin-left: 14px; }
.i-bulb { width: 13px; height: 16px; }
.i-folder { width: 16px; height: 15px; }
.gear { height: 16px; color: #555; }
.i-bulb + .i-folder, .i-bulb + .hatched { margin-left: 12px; }
.i-cube { width: 16px; height: 16px; }
.root { padding: 0 8px 0 2px; }
.root .mark { width: 3px; height: 16px; margin: 0 4px 0 0; background: #fcaeae; }
.root-name { display: flex; align-items: center; height: 16px; margin: 0 4px 0 8px; padding: 0 14px 0 3px; background: #999; color: #fff; }
.root input {
  appearance: none;
  width: 13px;
  height: 13px;
  margin: 0;
  border: 1px solid #333;
  border-radius: 50%;
  background: radial-gradient(#222 0 2px, #fff 3px);
}
.hatched { position: relative; display: flex; align-items: center; height: 20px; }
.hatched::after, .picked::after {
  content: "";
  position: absolute;
  right: 0;
  bottom: 2px;
  left: 0;
  height: 3px;
  background: repeating-linear-gradient(135deg, transparent 0 2px, #8794b0 2px 4px);
}
.leaf { padding-right: 0; }
.picked { position: relative; display: flex; align-items: center; height: 20px; margin-left: 9px; padding: 0 9px 0 2px; background: #0893d8; color: #fff; }
.picked b { margin-left: 11px; }
.picked::after { right: 4px; }
.i-sketch { width: 20px; height: 18px; }

/* Edit feature dialog */
.dialog { position: relative; width: 250px; margin-top: 116px; border: 1px solid #c2c2c2; background: #f1f1f1; }
.dialog-head { display: flex; align-items: center; height: 24px; padding-right: 4px; border-bottom: 1px solid #c2c2c2; color: #666; }
.dialog-head .edge { margin: 0 7px 0 1px; }
.dialog-head h2 { flex: 1; margin-left: 3px; }
.flip { transform: rotate(180deg); }
.fields { padding: 0 14px 20px 12px; }
.field { display: grid; grid-template-columns: 78px minmax(0, 1fr); align-items: center; height: 30px; }
.control { position: relative; display: flex; align-items: center; }
.selected { gap: 4px; width: 81px; height: 26px; background: #0893d8; color: #fff; font-weight: 600; }
.clear { margin-left: 11px; }
.pick select {
  appearance: none;
  width: 100%;
  height: 27px;
  padding: 0 16px 0 23px;
  border: 1px solid #d6d6d6;
  border-radius: 2px;
  background: #fff;
  color: #333;
  font: inherit;
}
.pick-icon { position: absolute; left: 4px; width: 16px; height: 16px; }
.pick .caret { position: absolute; right: 5px; }
.value { padding: 0 5px 0 7px; gap: 2px; }
.value input {
  flex: 1;
  min-width: 0;
  height: 21px;
  padding: 0 3px;
  border: 1px solid #c6c6c6;
  background: #fff;
  color: #333;
  font: inherit;
}
hr { height: 3px; margin: 4px 0 3px -11px; border: 0; background: #c4c4c4; }
.dialog-foot { display: flex; align-items: center; gap: 6px; height: 36px; padding: 0 5px 0 8px; border-top: 1px solid #c2c2c2; }
.info { margin-right: auto; }
.action { width: 60px; height: 19px; border: 1px solid #b8b8b8; background: #e8e8e8; color: #666; font-size: 12px; }

/* Overlays on the canvas */
.heads-up { position: absolute; left: calc(50% + 120px); top: 190px; display: flex; align-items: center; width: 112px; height: 22px; padding-left: 4px; background: #f1f1f1; }
.dots { width: 4px; height: 17px; background: repeating-conic-gradient(#d2d2d2 0 25%, transparent 0 50%) 0 0 / 4px 4px; }
.heads-up input {
  width: 80px;
  height: 22px;
  margin: 0 3px 0 12px;
  padding: 0;
  border: 2px solid #8dbcf5;
  outline: 1px solid #8dbcf5;
  outline-offset: -3px;
  background: linear-gradient(#b2d5fd, #b2d5fd) center / 39px 14px no-repeat, #fff;
  color: #222;
  font: inherit;
  font-size: 12px;
  text-align: center;
}
.tooltip {
  position: absolute;
  right: 0;
  top: 551px;
  padding: 0 2px 0 4px;
  border: 1px solid #999;
  border-right: 0;
  background: #eee;
  box-shadow: 0 1px 6px #bbb;
  color: #111;
  font: 13px/17px Inter, sans-serif;
  white-space: nowrap;
}

.bottom { position: relative; display: grid; grid-template-columns: 1fr auto 1fr; align-items: center; }
.comments { width: 300px; }
.comments h2 { margin-left: 20px; }
.view-tools { display: flex; align-items: center; gap: 7px; height: 24px; padding: 0 11px 0 2px; background: #f1f1f1; }
.view-tools button { gap: 2px; }
.spaced { margin-left: 6px; }
.status { justify-self: end; padding-right: 32px; font-size: 12px; font-weight: 600; }

/* Timeline */
.timeline { display: flex; align-items: center; height: 50px; padding: 0 13px 0 10px; border-top: 1px solid #c6c6c6; background: #f1f1f1; }
.playback { display: flex; gap: 11px; width: 132px; }
.playback svg { width: 14px; height: 14px; fill: #4c4c4c; }
.history { position: relative; display: flex; margin-bottom: 4px; }
.history::before { content: ""; position: absolute; left: 2px; top: -4px; width: 44px; height: 5px; background: #fcaeae; }
.history::after { content: ""; position: absolute; left: 12px; right: 11px; top: 28px; height: 2px; background: #c8c8c8; }
.history li { position: relative; display: flex; align-items: center; justify-content: center; width: 24px; height: 24px; }
.history li::after { content: ""; position: absolute; left: 12px; top: 23px; width: 2px; height: 6px; background: #c8c8c8; }
.history svg { width: 16px; height: 16px; opacity: .32; }
.history .current { border-radius: 2px; background: #0893d8; }
.history .current::after { top: 24px; }
.history .current svg, .history .live svg { opacity: 1; }
.playhead { position: relative; width: 12px; height: 32px; margin-left: -6px; }
.settings { margin-left: auto; color: #555; }
```
